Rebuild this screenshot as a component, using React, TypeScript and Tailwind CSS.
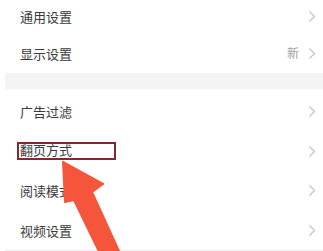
import React from 'react';

const font = { fontFamily: '"Noto Sans CJK SC", "Noto Sans", sans-serif' };

function Chevron() {
  return (
    <svg width="8" height="13" viewBox="0 0 8 13" className="shrink-0">
      <polyline points="1.5,1.5 6.5,6.5 1.5,11.5" fill="none" stroke="#c2c2c2" strokeWidth="1.2" />
    </svg>
  );
}

function Row({
  label,
  h,
  badge,
  boxed,
}: {
  label: string;
  h: string;
  badge?: string;
  boxed?: boolean;
}) {
  return (
    <div className={`flex items-center justify-between pl-[20px] pr-[7px] ${h}`}>
      {boxed ? (
        <span className="-ml-[3px] flex h-[18px] w-[99px] items-center border-2 border-[#7d2b2f] pb-[3px] pl-[1px] text-[13px] leading-none text-[#3a3a3a]">
          {label}
        </span>
      ) : (
        <span className="text-[13px] leading-none text-[#3a3a3a]">{label}</span>
      )}
      <div className="flex items-center gap-[9px]">
        {badge && <span className="text-[12px] leading-none text-[#a0a0a0]">{badge}</span>}
        <Chevron />
      </div>
    </div>
  );
}

export default function App() {
  return (
    <div className="relative h-[251px] w-[323px] overflow-hidden bg-white" style={font}>
      <Row label="通用设置" h="h-[33px]" />
      <Row label="显示设置" h="h-[40px]" badge="新" />
      <div className="ml-[5px] h-[16px] bg-[#f4f4f4]" />
      <Row label="广告过滤" h="h-[44px]" />
      <Row label="翻页方式" h="h-[36px]" boxed />
      <Row label="阅读模式" h="h-[42px]" />
      <Row label="视频设置" h="h-[38px]" />
      <div className="ml-[5px] h-[10px] bg-[#f4f4f4]" />
      <svg className="pointer-events-none absolute left-0 top-0" width="323" height="251" viewBox="0 0 323 251">
        <polygon
          points="63,162 103,184 92,192 124,262 104,262 74,200 65,202"
          fill="#f5553a"
          strokeLinejoin="round"
          stroke="#f5553a"
          strokeWidth="2"
        />
      </svg>
    </div>
  );
}
